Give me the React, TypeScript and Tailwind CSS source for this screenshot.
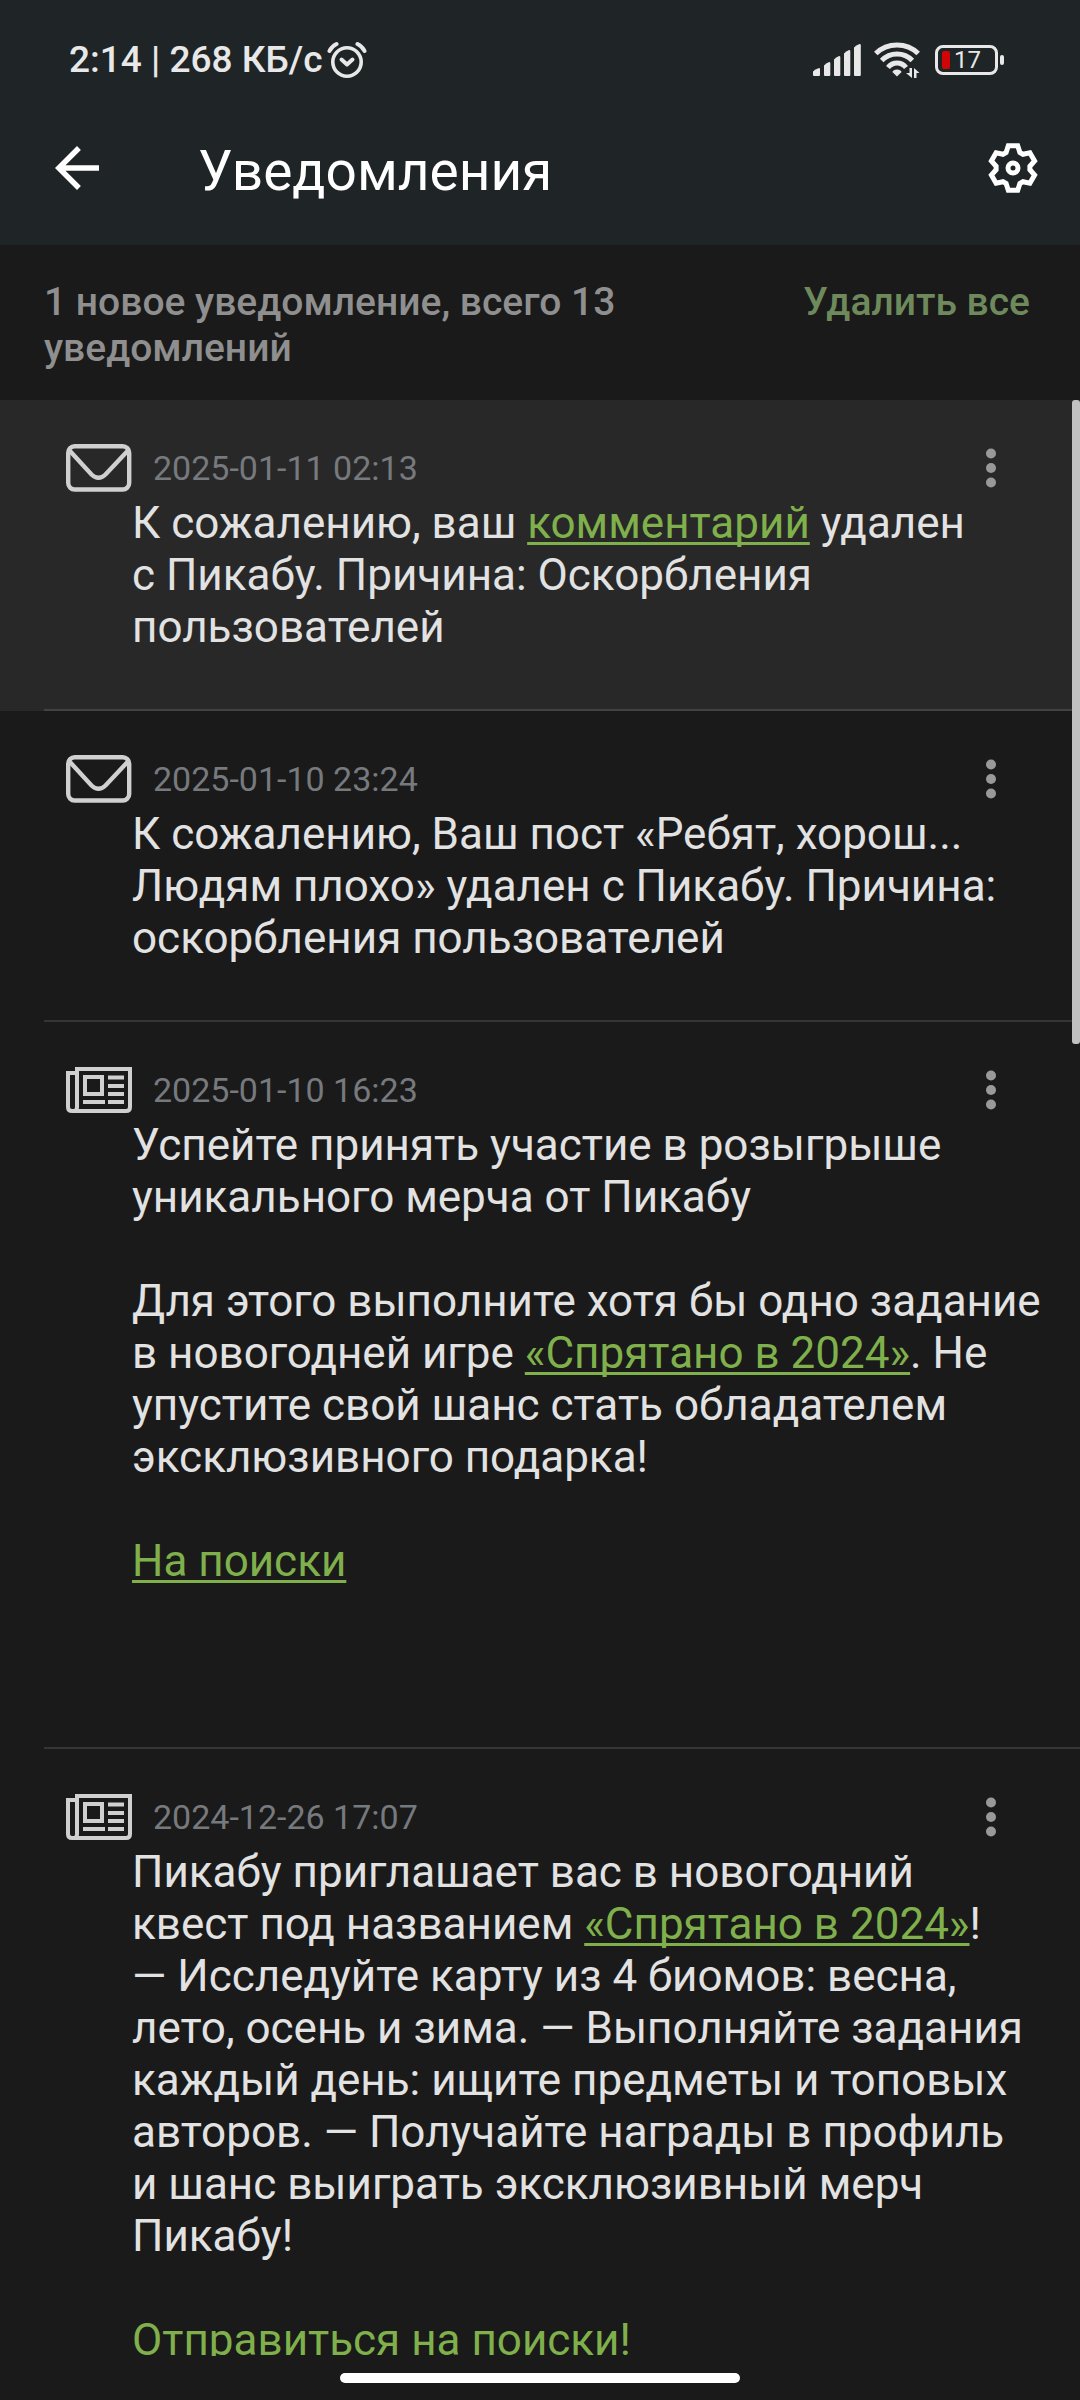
import type { ReactNode } from 'react';

interface Notification {
  id: number;
  kind: 'mail' | 'news';
  date: string;
  isNew?: boolean;
  body: ReactNode;
}

function TextLink({ children }: { children: ReactNode }) {
  return (
    <a
      href="#"
      className="text-[#7fb04b] underline decoration-[3px] underline-offset-[4px] [text-decoration-skip-ink:none]"
    >
      {children}
    </a>
  );
}

const notifications: Notification[] = [
  {
    id: 1,
    kind: 'mail',
    date: '2025-01-11 02:13',
    isNew: true,
    body: (
      <p>
        К сожалению, ваш <TextLink>комментарий</TextLink> удален с{'\u00a0'}Пикабу. Причина: Оскорбления
        пользователей
      </p>
    ),
  },
  {
    id: 2,
    kind: 'mail',
    date: '2025-01-10 23:24',
    body: <p>К сожалению, Ваш пост «Ребят, хорош... Людям плохо» удален с Пикабу. Причина: оскорбления пользователей</p>,
  },
  {
    id: 3,
    kind: 'news',
    date: '2025-01-10 16:23',
    body: (
      <>
        <p>Успейте принять участие в розыгрыше уникального мерча от Пикабу</p>
        <p className="mt-[52px]">
          Для этого выполните хотя бы одно задание в{'\u00a0'}новогодней игре <TextLink>«Спрятано в 2024»</TextLink>. Не
          упустите свой шанс стать обладателем эксклюзивного подарка!
        </p>
        <p className="mt-[52px] mb-[104px]">
          <TextLink>На поиски</TextLink>
        </p>
      </>
    ),
  },
  {
    id: 4,
    kind: 'news',
    date: '2024-12-26 17:07',
    body: (
      <>
        <p>
          Пикабу приглашает вас в новогодний квест{'\u00a0'}под названием <TextLink>«Спрятано в 2024»</TextLink>!
          <br />
          — Исследуйте карту из 4 биомов: весна, лето, осень и зима. — Выполняйте задания каждый день: ищите предметы и
          топовых авторов. — Получайте награды в профиль и{'\u00a0'}шанс выиграть эксклюзивный мерч Пикабу!
        </p>
        <p className="mt-[52px]">
          <TextLink>Отправиться на поиски!</TextLink>
        </p>
      </>
    ),
  },
];

function AlarmIcon() {
  return (
    <svg width="40" height="38" viewBox="0 0 40 38" fill="none" stroke="currentColor" strokeLinecap="round">
      <circle cx="20" cy="21" r="14.2" strokeWidth="3.6" />
      <path d="M14.500 18.500 20 23.500l5.500-5" strokeWidth="4" strokeLinejoin="round" />
      <path d="M2.500 10Q4.500 5.500 9.500 3M37.500 10Q35.500 5.500 30.500 3" strokeWidth="4" />
    </svg>
  );
}

function SignalIcon() {
  return (
    <svg width="48" height="32" viewBox="0 0 48 32" fill="currentColor">
      <path d="M0 27.500Q2 25 6 24q1 0 1 1v6q0 1-1 1H1q-1 0-1-1z" />
      <path d="M11 21.500Q13 19 16 18q1.300 0 1.300 1v12q0 1-1 1h-4.300q-1 0-1-1z" />
      <path d="M21 15.500Q23 13 26 12q1.300 0 1.300 1v18q0 1-1 1h-4.300q-1 0-1-1z" />
      <path d="M31 9.500Q33 7 36 6q1.300 0 1.300 1v24q0 1-1 1h-4.300q-1 0-1-1z" />
      <path d="M41 3.500Q43 1 46.500 0q1.300 0 1.300 1v30q0 1-1 1h-4.800q-1 0-1-1z" />
    </svg>
  );
}

function WifiIcon() {
  return (
    <svg width="46" height="36" viewBox="0 0 46 36" fill="none" stroke="currentColor" strokeWidth="5">
      <path d="M1.800 11.500Q10.500 3 23 3t21.200 8.500" />
      <path d="M7.700 18.500Q14 12 23 12t15.300 6.500" />
      <path d="M14 25.500Q17.500 21 23 21t9 4.500" />
      <path d="M23 27.500c2.600 0 4 1 4.600 2.500L23 34.500 18.400 30c.6-1.500 2-2.500 4.600-2.500z" fill="currentColor" stroke="none" />
      <path d="M35.500 26h2.500v10l-6-5h3.500zM40 36V26l5.500 5h-3v5z" fill="currentColor" stroke="none" />
    </svg>
  );
}

function Battery({ level }: { level: number }) {
  return (
    <div className="flex items-center gap-0.5">
      <div className="flex h-[30px] w-[63px] items-center gap-1 rounded-lg border-3 border-[#e8e8e8] pl-1">
        <span className="h-[18px] w-2 rounded-xs bg-[#d00505]" />
        <span className="text-2xl leading-6">{level}</span>
      </div>
      <span className="h-2.5 w-1 rounded-sm bg-[#e8e8e8]" />
    </div>
  );
}

function BackIcon() {
  return (
    <svg width="66" height="66" viewBox="0 0 24 24" fill="currentColor">
      <path d="M20 11H7.830l5.590-5.590L12 4l-8 8 8 8 1.410-1.410L7.830 13H20z" />
    </svg>
  );
}

function GearIcon() {
  return (
    <svg width="50" height="50" viewBox="-25 -25 50 50" fill="none" stroke="currentColor" strokeWidth="5">
      <path d="M-4.700-22.200H4.700L6.900-15.500 10-13.700 16.900-15.200 21.600-7 16.900-1.800V1.800L21.600 7 16.900 15.200 10 13.700 6.900 15.500 4.700 22.200H-4.700L-6.900 15.500-10 13.700-16.900 15.200-21.600 7-16.900 1.800V-1.800L-21.600-7-16.900-15.200-10-13.700-6.900-15.500z" />
      <circle r="5" />
    </svg>
  );
}

function MailIcon() {
  return (
    <svg width="66" height="48" viewBox="0 0 66 48" fill="none" stroke="currentColor" strokeWidth="4.400">
      <rect x="2.200" y="2.200" width="61" height="43.300" rx="6.500" />
      <path d="M3.500 6.500 25.500 30.500Q32.500 37 39.500 30.500L62 6.500" />
    </svg>
  );
}

function NewsIcon() {
  return (
    <svg width="66" height="46" viewBox="0 0 66 46" fill="none" stroke="currentColor" strokeWidth="4">
      <path d="M11 6H2v34q0 4 4 4h54q4 0 4-4V2H11v38q0 4-3 4" />
      <rect x="19" y="10" width="17" height="17" />
      <path d="M17 35h22M42 10.500h16M42 19h16M42 27h16M42 35h16" />
    </svg>
  );
}

function DotsIcon() {
  return (
    <svg width="12" height="40" viewBox="0 0 12 40" fill="currentColor">
      <circle cx="6" cy="5.500" r="5" />
      <circle cx="6" cy="20" r="5" />
      <circle cx="6" cy="34.500" r="5" />
    </svg>
  );
}

function NotificationItem({ item }: { item: Notification }) {
  return (
    <li className={item.isNew ? 'bg-[#282828]' : ''}>
      <div className="flex h-[97px] items-center pt-[38px] pr-11 pl-[66px]">
        <span className="text-[#d0d0d0]">{item.kind === 'mail' ? <MailIcon /> : <NewsIcon />}</span>
        <time className="ml-[21px] text-[34px] leading-[38px] text-[#76797d]">{item.date}</time>
        <button type="button" aria-label="Меню" className="ml-auto flex w-[90px] justify-center text-[#999]">
          <DotsIcon />
        </button>
      </div>
      <div className="pr-9 pb-14 pl-[132px] text-[44px] leading-[52px]">{item.body}</div>
      <div className="ml-11 h-0.5 bg-white/12" />
    </li>
  );
}

export default function App() {
  return (
    <div className="flex h-screen flex-col bg-[#1a1a1a] font-['Roboto',sans-serif] text-[#e2e2e2]">
      <header className="bg-[#1f2426]">
        {/* Строка состояния */}
        <div className="flex h-[90px] items-center justify-between pt-[30px] pr-[76px] pl-[69px] text-[#e8e8e8]">
          <div className="flex items-center gap-1">
            <span className="text-[37px] leading-[42px] font-medium">2:14 | 268 КБ/с</span>
            <AlarmIcon />
          </div>
          <div className="flex items-center">
            <SignalIcon />
            <span className="mr-[15px] ml-[13px]">
              <WifiIcon />
            </span>
            <Battery level={17} />
          </div>
        </div>

        <div className="flex h-[155px] items-center pr-[42px] pl-11 text-white">
          <button type="button" aria-label="Назад">
            <BackIcon />
          </button>
          <h1 className="ml-[88px] flex-1 pt-1.5 text-[55px] leading-[64px]">Уведомления</h1>
          <button type="button" aria-label="Настройки">
            <GearIcon />
          </button>
        </div>
      </header>

      <div className="flex items-start justify-between gap-6 pt-[34px] pr-[50px] pb-[29px] pl-11 text-[39px] leading-[46px] font-medium">
        <p className="text-[#8f8f8f]">1 новое уведомление, всего 13 уведомлений</p>
        <button type="button" className="shrink-0 text-[#6e8a5c]">
          Удалить все
        </button>
      </div>

      <main className="relative min-h-0 flex-1 overflow-hidden">
        <ul>
          {notifications.map((item) => (
            <NotificationItem key={item.id} item={item} />
          ))}
        </ul>
        {/* Полоса прокрутки */}
        <div className="absolute top-0 right-0 h-[644px] w-2 rounded-[3px] bg-[#c1c1c1]" />
      </main>

      <div className="flex h-11 items-center justify-center">
        <div className="h-2.5 w-[400px] rounded-full bg-white" />
      </div>
    </div>
  );
}
